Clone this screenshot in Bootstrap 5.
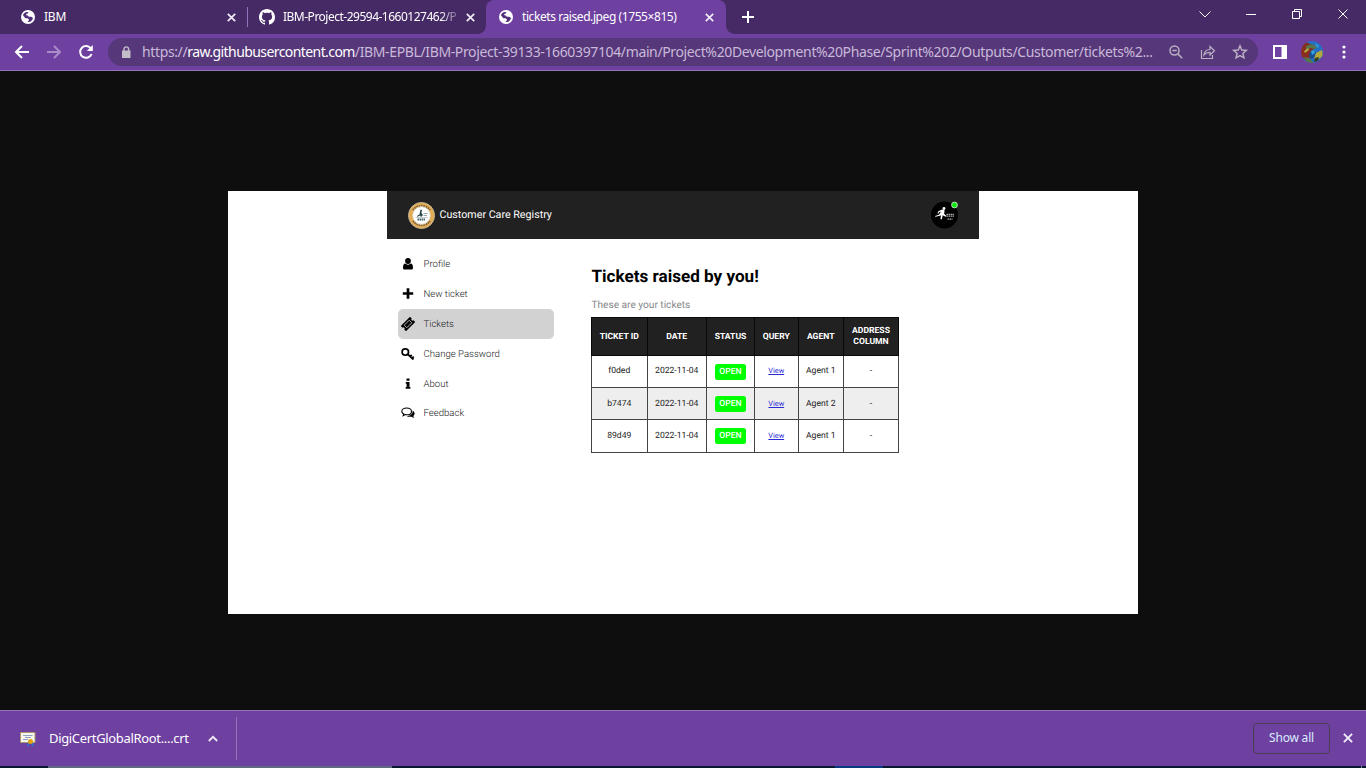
<!DOCTYPE html>
<html lang="en">
<head>
<meta charset="utf-8">
<title>tickets raised.jpeg (1755×815)</title>
<meta name="viewport" content="width=device-width, initial-scale=1">
<link href="https://cdn.jsdelivr.net/npm/bootstrap@5.3.0/dist/css/bootstrap.min.css" rel="stylesheet">
<style>
body{height:768px;overflow:hidden;background:#0e0e0e;font:12px/16px "Noto Sans","Open Sans",sans-serif;color:#fff}
svg{display:block;flex:none}
.strip{height:34px;background:#462a65}
.tab{height:34px;flex:none;white-space:nowrap}
.tab .ttl{margin-left:9px;overflow:hidden;letter-spacing:-.42px}
.tab.current{width:240px;background:#6e41a1;border-radius:8px 8px 0 0;position:relative}
.tab.current::before,.tab.current::after{content:"";position:absolute;bottom:0;width:8px;height:8px}
.tab.current::before{left:-8px;background:radial-gradient(circle at 0 0,transparent 7.5px,#6e41a1 8px)}
.tab.current::after{right:-8px;background:radial-gradient(circle at 100% 0,transparent 7.5px,#6e41a1 8px)}
.tab .fade-end{margin-left:8px;letter-spacing:-.5px;-webkit-mask-image:linear-gradient(90deg,#000 90%,rgba(0,0,0,.2))}
.tools{height:37px;background:#6e41a1;border-bottom:1px solid #9672bb;padding:0 0 0 14px}
.omni{width:1150px;height:28px;border-radius:14px;background:#56377a;margin-left:14px;color:#c8bad8;white-space:nowrap}
.url{font-size:14px;line-height:20px;width:1020px;margin-left:11px;letter-spacing:-.37px}
.url b{font-weight:400;color:#fff;letter-spacing:-.58px}
.stage{height:639px;padding:120px 0 0 228px}
.sheet{width:910px;height:423px;background:#fff;padding-left:159px;font-family:Roboto,sans-serif;text-rendering:geometricPrecision}
.app{width:592px}
.apphead{height:48px;background:#212121;padding:0 20px 0 21px}
.brand{font-size:10.7px;margin-left:4.500px}
.menu{width:156px;margin:10.500px 0 0 11px}
.menu a{height:29.8px;padding-left:3px;font-size:9.6px;font-weight:300;color:#222;text-decoration:none;border-radius:5px}
.menu a.on{background:#d2d2d2}
.menu span{margin-left:8.500px;padding-top:2px}
.main{margin-left:37.500px;padding-top:27px}
h1{font-size:17.1px;line-height:22px;font-weight:700;color:#000;margin:0}
.sub{font-size:10.15px;line-height:14px;color:#888;margin:10.500px 0 4.500px}
.tix{width:307px;table-layout:fixed;border-collapse:collapse;font-size:8.6px;line-height:10.5px;color:#222;text-align:center;margin-left:-.5px}
.tix td,.tix th{border:1px solid #444;padding:1px 0 0;vertical-align:middle;text-align:center}
.tix td{border-color:#444;}
.tix tr{height:32.4px}
.tix thead tr{height:37.5px;background:#212121;color:#fff}
.tix th{border-color:#080808;font-weight:700;font-size:8.6px}
.tix .alt{background:#eee}
.open{display:inline-block;width:31px;height:16px;line-height:16.5px;border-radius:2.5px;background:#0f0;color:#fff;font-weight:500;font-size:8.6px;vertical-align:middle}
.tix a{font-size:7.3px;color:#2929d6}
.shelf{height:56px;background:#6e41a1;border-top:1px solid #9672bb;padding-left:20px}
.shelf .name{font-size:13px;width:141px;margin-left:13px;white-space:nowrap;letter-spacing:-.33px;margin-top:-2px}
.vr-line{width:1px;background:#9672bb}
.showall{width:77px;height:31px;border:1px solid #493e55;border-radius:4px;color:#d8ecff;font-size:12px;margin-right:11px;letter-spacing:-.2px;margin-top:-1px;padding-bottom:1px}
.taskbar{height:2px;background:linear-gradient(90deg,#0c1730 48px,#5f6980 48px 392px,#0c1730 392px 835px,#0a3a80 835px 883px,#0c1730 883px 1361px,#7a8b99 1361px 1362px,#0c1730 1362px)}
</style>
</head>
<body>
<svg width="0" height="0" class="position-absolute">
<defs>
<symbol id="globe" viewBox="0 0 14 14"><circle cx="7" cy="7" r="7" fill="#fff"/><path d="M2 5.2C2.400 3.500 4 2.200 6 2l1.500.3-1 1.500H5.300v1.400l1.500.2 1 1.400h2.500l1.700 1.100c-.4 2.200-2 3.800-4.300 4.200L6.500 12l1.300-1.500V9.300L6.500 8.200H4.300L3 6.500z" fill="#51307a"/><path d="M9 2.500l1.800 1.400-.6 1.500-1.600-.6z" fill="#fff"/></symbol>
<symbol id="x" viewBox="0 0 9 9"><path d="M.8.8l7.400 7.400M8.200.8L.8 8.200" stroke="#f1ecf6" stroke-width="1.700"/></symbol>
</defs>
</svg>
<header class="strip d-flex">
 <div class="tab d-flex align-items-center" style="width:247px;padding-left:21px">
  <svg width="14" height="14"><use href="#globe"/></svg><span class="ttl" style="width:183px;letter-spacing:-.2px">IBM</span><svg width="9" height="9"><use href="#x"/></svg>
 </div>
 <div class="vr-line my-auto" style="height:20px"></div>
 <div class="tab d-flex align-items-center" style="width:238px;padding-left:11px">
  <svg width="16" height="16" viewBox="0 0 16 16" fill="#fff"><path d="M8 0C3.580 0 0 3.580 0 8c0 3.540 2.290 6.530 5.470 7.590.4.070.55-.17.55-.38 0-.19-.01-.82-.01-1.490-2.010.37-2.530-.49-2.690-.94-.09-.23-.48-.94-.82-1.130-.28-.15-.68-.52-.01-.53.63-.01 1.080.58 1.230.82.72 1.210 1.870.87 2.330.66.070-.52.28-.87.51-1.070-1.780-.2-3.640-.89-3.640-3.950 0-.87.31-1.590.82-2.150-.08-.2-.36-1.020.08-2.120 0 0 .67-.21 2.200.82.64-.18 1.320-.27 2-.27s1.360.09 2 .27c1.530-1.040 2.200-.82 2.200-.82.44 1.100.16 1.920.08 2.120.51.56.82 1.270.82 2.150 0 3.070-1.870 3.750-3.650 3.950.29.25.54.73.54 1.480 0 1.070-.01 1.930-.01 2.200 0 .21.15.46.55.38A8.010 8.010 0 0016 8c0-4.420-3.580-8-8-8z"/></svg>
  <span class="ttl fade-end" style="width:175px;margin-right:8px">IBM-Project-29594-1660127462/P</span><svg width="9" height="9"><use href="#x"/></svg>
 </div>
 <div class="tab current d-flex align-items-center" style="padding-left:13px">
  <svg width="14" height="14"><use href="#globe"/></svg><span class="ttl" style="width:183px">tickets raised.jpeg (1755×815)</span><svg width="9" height="9"><use href="#x"/></svg>
 </div>
 <svg class="my-auto" style="margin-left:16px" width="12" height="12"><path d="M6 0v12M0 6h12" stroke="#fff" stroke-width="2"/></svg>
 <svg class="ms-auto" width="168" height="34" fill="none" stroke="#fff"><path d="M1.500 11.500l5.500 5.500 5.500-5.500"/><path d="M48 14.500h10M94.500 11.500h7v7h-7zM96.500 11.500v-2h7v7h-2M140.500 9.500l9 9M149.500 9.500l-9 9"/></svg>
</header>
<div class="tools d-flex align-items-center">
 <svg width="80" height="16" fill="none" stroke="#fff" stroke-width="2"><path d="M15 8H2.500M8 2L2 8l6 6"/><path d="M33 8h12.500M40 2l6 6-6 6" stroke="#a98bc8"/><path d="M77 4.600A5.900 5.900 0 1 0 77.600 10"/><path d="M78.800 1v6h-6z" fill="#fff" stroke="none"/></svg>
 <div class="omni d-flex align-items-center">
  <svg width="9" height="13" style="margin-left:14px" fill="#c3bcc9"><path d="M0 4.500h8.500v7.500H0z"/><path d="M2 5V3.200a2.300 2.300 0 0 1 4.600 0V5" fill="none" stroke="#c3bcc9" stroke-width="1.400"/></svg>
  <span class="url">https://<b>raw.githubusercontent.com</b>/IBM-EPBL/IBM-Project-39133-1660397104/main/Project%20Development%20Phase/Sprint%202/Outputs/Customer/tickets%2...</span>
  <svg width="82" height="18" style="margin-left:6px" fill="none" stroke="#b9b0c2" stroke-width="1.500"><circle cx="6.500" cy="7.500" r="4.500"/><path d="M4.300 7.500h4.500M9.900 10.900l4.300 4.300"/><path d="M33.500 7v8.500h11V12" stroke-width="1.200"/><path d="M36 12c.5-4 3-5.500 6-5.500V3.500l4.500 4.300-4.500 4.200V9.400c-3 0-4.500.6-6 2.600z" stroke-width="1.200"/><path d="M72 2.800l1.800 4.200 4.500.4-3.400 3 1 4.400-3.900-2.300-3.900 2.300 1-4.400-3.400-3 4.500-.4z"/></svg>
 </div>
 <svg style="margin-left:15px" width="14" height="14"><path d="M1 1h12v12H1z" fill="none" stroke="#fff" stroke-width="2"/><path d="M8.500 1H13v12H8.500z" fill="#fff"/></svg>
 <svg style="margin-left:14px" width="22" height="22" viewBox="0 0 22 22"><clipPath id="av"><circle cx="11" cy="11" r="11"/></clipPath><g clip-path="url(#av)"><path fill="#276fc2" d="M0 0h22v22H0z"/><path fill="#8b2c20" d="M0 6l5-5 6 3 3 3-5 4 1 5-5 3-5-4z"/><path fill="#56754b" d="M5 5l6-2 5 3-2 2-5-1-4 3zM3 16l5 1 5 5H6z"/><path fill="#b2a83b" d="M15 12l6-3 1 6-6 4-3-2zM3 10l4-3 1 2-4 3z"/><path fill="#174e91" d="M8 13l3-4 4 2-2 6-4 1z"/><path fill="#35a0dc" d="M10 10l3-1 1 3-3 2zM14 2l4 3-2 2z"/><path fill="#364020" d="M14 17l4-1-1 4-4 1z"/></g></svg>
 <svg style="margin-left:19px" width="4" height="14" fill="#fff"><circle cx="2" cy="2" r="1.600"/><circle cx="2" cy="7" r="1.600"/><circle cx="2" cy="12" r="1.600"/></svg>
</div>
<main class="stage">
 <div class="sheet"><div class="app">
  <div class="apphead d-flex align-items-center">
   <svg width="27" height="27" viewBox="0 0 27 27"><circle cx="13.500" cy="13.500" r="13" fill="#e2aa53" stroke="#c6b994"/><path d="M5 8a10.800 10.800 0 0 1 17 0M5 19a10.800 10.800 0 0 0 17 0" fill="none" stroke="#5c4b30" stroke-width="2" stroke-dasharray="1.500 .8" opacity=".8"/><circle cx="13.500" cy="13.500" r="8.800" fill="#fff" stroke="#ded8c4"/><path d="M12.500 7.500l1.500.5-.5 3 1.500 2-2 2-1-1.500-3 1.500.3-1.200 2.200-1.600z" fill="#2d4a47"/><path d="M15.500 11.500h4M15.500 13.500h3.500" stroke="#9aa" stroke-width="1"/><path d="M9.500 17.500h8" stroke="#466" stroke-width="1.800" stroke-dasharray="1.500 .5"/><path d="M7.500 15.500h12" stroke="#9ab" stroke-width=".6"/></svg>
   <span class="brand">Customer Care Registry</span>
   <svg class="ms-auto" width="28" height="28" viewBox="0 0 28 28"><circle cx="13.500" cy="14" r="13.500" fill="#000"/><circle cx="13" cy="7.500" r="1.400" fill="#fff"/><path d="M11 8.500l2.500.5-.3 4 2.300 2-.8.7-3-1.400-.8 4H9.500l.4-4-1 .5-4.400 1L4 15l4-1.300 2-3.200-2 .8-.7 1.500-.8-.3.8-2.200z" fill="#fff"/><path d="M15.500 13.300h8M15.500 15.200h7.500M16.500 18.200h5" stroke="#aaa" stroke-width="1.300" stroke-dasharray="1.500 .5"/><circle cx="23.500" cy="4" r="2.900" fill="#0be80b" stroke="#ddf6dd" stroke-width=".8"/></svg>
  </div>
  <div class="d-flex">
   <nav class="menu d-flex flex-column">
    <a class="d-flex align-items-center" href="#"><svg width="14" height="14"><circle cx="7" cy="4" r="2.900"/><path d="M4 6.500C2.500 7 2 8.500 2 11c0 1.300.8 1.600 1.800 1.600h6.400c1 0 1.800-.4 1.800-1.600 0-2.500-.5-4-2-4.500C8.500 8 5.500 8 4 6.500z"/></svg><span>Profile</span></a>
    <a class="d-flex align-items-center" href="#"><svg width="14" height="14"><path d="M7 1.300v10.400M1.800 6.500h10.400" stroke="#000" stroke-width="2.700"/></svg><span>New ticket</span></a>
    <a class="on d-flex align-items-center" href="#"><svg width="14" height="14"><g transform="rotate(-45 7 7)"><path d="M.5 3.300h13v2.500a1.200 1.200 0 0 0 0 2.400v2.500H.5V8.200a1.200 1.200 0 0 0 0-2.400z"/><path d="M3.500 5.200h7v3.600h-7z" fill="none" stroke="#d2d2d2" stroke-width=".8"/></g></svg><span>Tickets</span></a>
    <a class="d-flex align-items-center" href="#"><svg width="14" height="14"><circle cx="4.300" cy="5" r="3.200" fill="none" stroke="#000" stroke-width="1.700"/><path d="M6.500 7l6 5.500M9 9.500l1.700-1.700M11 11.300L12.700 9.700" fill="none" stroke="#000" stroke-width="1.700"/></svg><span>Change Password</span></a>
    <a class="d-flex align-items-center" href="#"><svg width="14" height="14"><path d="M5.500 1.500h3v2.300h-3zM4.800 5h3.700v5h.9v1.800H4.700V10h.9V6.700h-.8z"/></svg><span>About</span></a>
    <a class="d-flex align-items-center" href="#"><svg width="14" height="14"><path d="M5.700 2c2.800 0 4.800 1.500 4.800 3.400S8.500 8.800 5.700 8.800L4.400 8.600l-2.200 1 .6-1.700C1.600 7.300.8 6.400.8 5.400.8 3.500 2.900 2 5.700 2z" fill="none" stroke="#000" stroke-width="1.100"/><path d="M11.600 4.500c2.500 1.500 2.600 4.200.6 5.500l1 1.900-2.800-1.200c-2 .4-3.700 0-4.800-.8 3.800 0 6.400-2.200 6-5.400z"/></svg><span>Feedback</span></a>
   </nav>
   <section class="main">
    <h1>Tickets raised by you!</h1>
    <p class="sub">These are your tickets</p>
    <table class="tix">
     <colgroup><col style="width:55.500px"><col style="width:59.500px"><col style="width:48px"><col style="width:43.500px"><col style="width:45.500px"><col style="width:55px"></colgroup>
     <thead><tr><th>TICKET ID</th><th>DATE</th><th>STATUS</th><th>QUERY</th><th>AGENT</th><th>ADDRESS COLUMN</th></tr></thead>
     <tbody>
      <tr><td>f0ded</td><td>2022-11-04</td><td><span class="open">OPEN</span></td><td><a href="#">View</a></td><td>Agent 1</td><td>-</td></tr>
      <tr class="alt"><td>b7474</td><td>2022-11-04</td><td><span class="open">OPEN</span></td><td><a href="#">View</a></td><td>Agent 2</td><td>-</td></tr>
      <tr><td>89d49</td><td>2022-11-04</td><td><span class="open">OPEN</span></td><td><a href="#">View</a></td><td>Agent 1</td><td>-</td></tr>
     </tbody>
    </table>
   </section>
  </div>
 </div></div>
</main>
<footer class="shelf d-flex align-items-center">
 <svg width="16" height="14"><path d="M.5.500h14.500v10H.5z" fill="#f7f5ec" stroke="#a8986b"/><path d="M3 3.500h9.500M5 5.500h6M3 7.500h5" stroke="#8ea0c4"/><path d="M9 10l-1 4M12 10l1 4" stroke="#1f7ae0" stroke-width="1.500"/><circle cx="10.500" cy="9.500" r="2.500" fill="#e3a008"/></svg>
 <span class="name">DigiCertGlobalRoot....crt</span>
 <svg style="margin-left:18px" width="10" height="7"><path d="M.8 6L5 1.800 9.200 6" fill="none" stroke="#efe9f5" stroke-width="1.800"/></svg>
 <div class="vr-line" style="height:43px;margin-left:18px"></div>
 <div class="showall ms-auto d-flex align-items-center justify-content-center">Show all</div>
 <svg style="margin:-2px 13px 0 2px" width="10" height="10" viewBox="0 0 9 9"><use href="#x"/></svg>
</footer>
<div class="taskbar"></div>
<script src="https://cdn.jsdelivr.net/npm/bootstrap@5.3.0/dist/js/bootstrap.bundle.min.js"></script>
</body>
</html>
